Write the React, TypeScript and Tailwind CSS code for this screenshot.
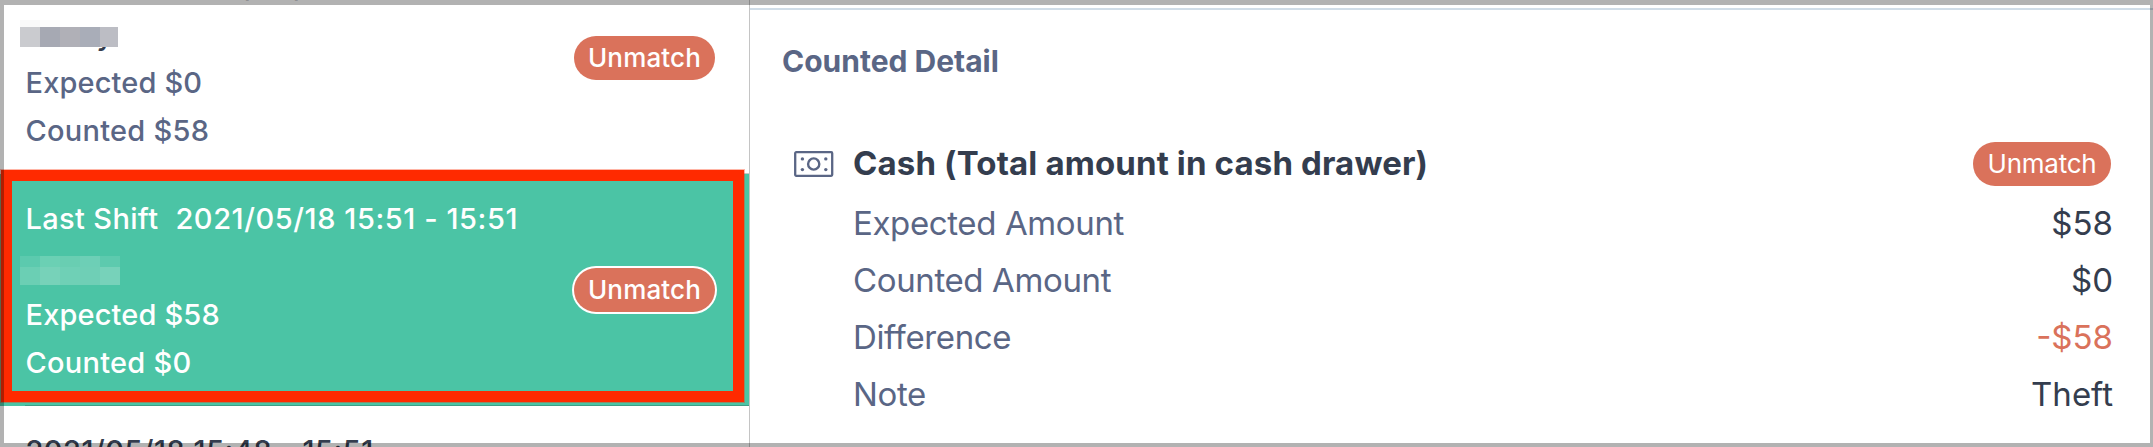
import type { ReactNode } from "react";

function Badge({ outlined = false, compact = false }: { outlined?: boolean; compact?: boolean }) {
  return (
    <span
      className={
        "flex h-11 shrink-0 items-center justify-center rounded-full bg-[#da725b] text-[26px] leading-none text-white " +
        (compact ? "w-[138px] tracking-[-0.25px] " : "w-[141px] tracking-[0.15px] ") +
        (outlined ? "ring-2 ring-white" : "")
      }
    >
      Unmatch
    </span>
  );
}

function Mosaic({ rows }: { rows: { height: string; cells: string[] }[] }) {
  return (
    <div>
      {rows.map((row, i) => (
        <div key={i} className={"flex " + row.height}>
          {row.cells.map((cell, j) => (
            <div key={j} className={"h-full " + cell} />
          ))}
        </div>
      ))}
    </div>
  );
}

function ShiftItem({
  date,
  name,
  expected,
  counted,
  selected = false,
}: {
  date: ReactNode;
  name: ReactNode;
  expected: string;
  counted: string;
  selected?: boolean;
}) {
  return (
    <div
      className={
        "relative flex h-[232px] shrink-0 items-center justify-between pr-[34px] pl-[25.5px] text-[29px] leading-[48px] font-medium " +
        (selected ? "bg-[#4bc4a5] text-white" : "bg-white text-[#5a6685]")
      }
    >
      <div className="pt-0.5 whitespace-pre">
        <div className="h-12">{date}</div>
        <div className="relative h-12">{name}</div>
        <div className="h-12 tracking-[0.15px]">Expected {expected}</div>
        <div className="h-12 tracking-[0.25px]">Counted {counted}</div>
      </div>
      <Badge outlined={selected} />
      <div className={"absolute right-0 bottom-0 left-[25px] h-px " + (selected ? "bg-[#3d9f87]" : "bg-[#c8c8c8]")} />
    </div>
  );
}

function CashIcon() {
  return (
    <svg className="h-[26px] w-10 shrink-0" viewBox="0 0 40 26" fill="none" stroke="#5a6685">
      <rect x="1.2" y="1.2" width="37" height="23.6" rx="1" strokeWidth="2.3" />
      <circle cx="19.7" cy="13" r="5.6" strokeWidth="2.4" />
      <g fill="#5a6685" stroke="none">
        <circle cx="8.4" cy="7.9" r="1.7" />
        <circle cx="31.8" cy="7.9" r="1.7" />
        <circle cx="8.4" cy="18.6" r="1.7" />
        <circle cx="31.8" cy="18.6" r="1.7" />
      </g>
    </svg>
  );
}

function DetailRow({ label, value, tone = "text-[#343d4e]" }: { label: string; value: string; tone?: string }) {
  return (
    <div className="flex h-[57px] items-center justify-between pl-[71px] text-[33px]">
      <span className="tracking-[-0.38px] text-[#5a6685]">{label}</span>
      <span className={tone}>{value}</span>
    </div>
  );
}

export default function App() {
  return (
    <div className="relative flex h-[447px] w-[2153px] overflow-hidden bg-white font-['Inter',sans-serif]">
      <div className="relative flex h-full w-[750px] shrink-0 flex-col overflow-hidden border-r border-[#c4c4c4]">
        <div className="-mt-[58px] flex flex-col">
          <ShiftItem
            date={<span className="pl-[151px] tracking-[0.55px] text-[#343d4e]">2021/05/18</span>}
            name={
              <>
                <span className="pl-[71px] text-[#343d4e]">y</span>
                <div className="absolute top-[9px] -left-[5.5px]">
                  <Mosaic
                    rows={[
                      { height: "h-[7px]", cells: ["w-5 bg-[#f9f9f9]", "w-5 bg-[#fcfcfc]"] },
                      {
                        height: "h-5",
                        cells: [
                          "w-5 bg-[#cacbcf]",
                          "w-5 bg-[#a6a9b3]",
                          "w-5 bg-[#b0b0b7]",
                          "w-5 bg-[#a9adb8]",
                          "w-[18px] bg-[#bcbdc4]",
                        ],
                      },
                    ]}
                  />
                </div>
              </>
            }
            expected="$0"
            counted="$58"
          />
          <ShiftItem
            selected
            date={
              <>
                <span className="tracking-[0.35px]">Last Shift</span>
                <span className="pl-[17px] tracking-[0.57px]">2021/05/18 15:51 - 15:51</span>
              </>
            }
            name={
              <div className="absolute top-[13px] -left-[5.5px]">
                <Mosaic
                  rows={[
                    {
                      height: "h-[11px]",
                      cells: [
                        "w-5 bg-[#5ccaae]",
                        "w-5 bg-[#6bd0b4]",
                        "w-5 bg-[#69ceb2]",
                        "w-5 bg-[#6dcfb6]",
                        "w-5 bg-[#5dcaae]",
                      ],
                    },
                    {
                      height: "h-[18px]",
                      cells: [
                        "w-5 bg-[#6bcfb4]",
                        "w-5 bg-[#77d2b9]",
                        "w-5 bg-[#6fd0b6]",
                        "w-5 bg-[#6fcfb6]",
                        "w-5 bg-[#77d2ba]",
                      ],
                    },
                  ]}
                />
              </div>
            }
            expected="$58"
            counted="$0"
          />
          <div className="h-[68px] pt-[21px] pl-[25.5px] text-[29px] leading-[48px] font-medium tracking-[0.5px] text-[#343d4e]">
            2021/05/18 15:48 - 15:51
          </div>
        </div>
        <div className="absolute top-[170px] left-px h-[232px] w-[743px] border-[11px] border-[#ff2a00] shadow-[0_0_0_1px_rgba(255,42,0,0.35)]" />
      </div>

      <div className="flex grow flex-col pt-2">
        <div className="h-0.5 bg-[#d0dde8]" />
        <div className="flex grow flex-col pr-10 pl-[32px]">
          <h2 className="mt-[27px] text-[30px] leading-[48px] font-bold tracking-[0px] text-[#5a6685]">
            Counted Detail
          </h2>
          <div className="mt-[50px] flex h-[57px] items-center pr-0.5">
            <div className="pl-[12px]">
              <CashIcon />
            </div>
            <h3 className="grow pl-[19px] text-[33px] font-bold tracking-[0.14px] text-[#343d4e]">
              Cash (Total amount in cash drawer)
            </h3>
            <Badge compact />
          </div>
          <div className="mt-[3px]">
            <DetailRow label="Expected Amount" value="$58" />
            <DetailRow label="Counted Amount" value="$0" />
            <DetailRow label="Difference" value="-$58" tone="text-[#da725b]" />
            <DetailRow label="Note" value="Theft" />
          </div>
        </div>
      </div>

      <div className="pointer-events-none absolute inset-0 border-t-[5px] border-r-[3px] border-b-[4px] border-l-[4px] border-black/30" />
    </div>
  );
}
